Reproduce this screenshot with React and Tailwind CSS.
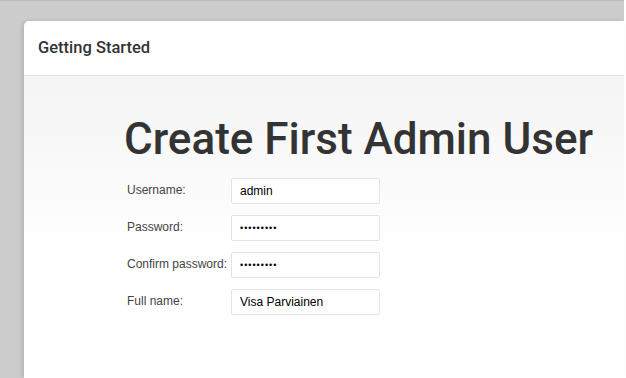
const fields = [
  { label: "Username:", value: "admin", type: "text" },
  { label: "Password:", value: "123456789", type: "password" },
  { label: "Confirm password:", value: "123456789", type: "password" },
  { label: "Full name:", value: "Visa Parviainen", type: "text" },
];

const App = () => {
  return (
    <div className="w-[626px] h-[378px] bg-white overflow-hidden">
      <div className="w-[624px] h-[378px] bg-[#cccccc] border-t border-[#b9b9b9] pt-5 pl-6 flex">
        <div className="flex-1 flex flex-col bg-white rounded-tl-[5px] shadow-[-2px_0_4px_rgba(0,0,0,0.12)] overflow-hidden">
          <div className="h-[55px] shrink-0 flex items-center pl-[14px] border-b border-[#e2e2e2]">
            <h2 className="text-[16.5px] font-medium text-[#333] font-['Roboto',sans-serif]">
              Getting Started
            </h2>
          </div>
          <div className="flex-1 bg-[linear-gradient(to_bottom,#f4f4f4,#ffffff_60%)] pl-[100px] pt-[41px]">
            <h1 className="text-[44px] leading-none font-medium text-[#333] font-['Roboto',sans-serif]">
              Create First Admin User
            </h1>
            <div className="mt-[17px] flex flex-col gap-[11px] font-['Liberation_Sans',Arial,sans-serif]">
              {fields.map((f) => (
                <div key={f.label} className="flex items-center">
                  <label className="w-[107px] pl-[3px] text-[12px] text-[#444] -mt-[2px]">
                    {f.label}
                  </label>
                  <input
                    type={f.type}
                    defaultValue={f.value}
                    readOnly
                    className={`w-[149px] h-[26px] px-[8px] text-black bg-white border border-[#e3e3e3] rounded-[2px] outline-none ${
                      f.type === "password" ? "text-[9px] tracking-[1px]" : "text-[12px]"
                    }`}
                  />
                </div>
              ))}
            </div>
          </div>
        </div>
      </div>
    </div>
  );
};

export default App;
